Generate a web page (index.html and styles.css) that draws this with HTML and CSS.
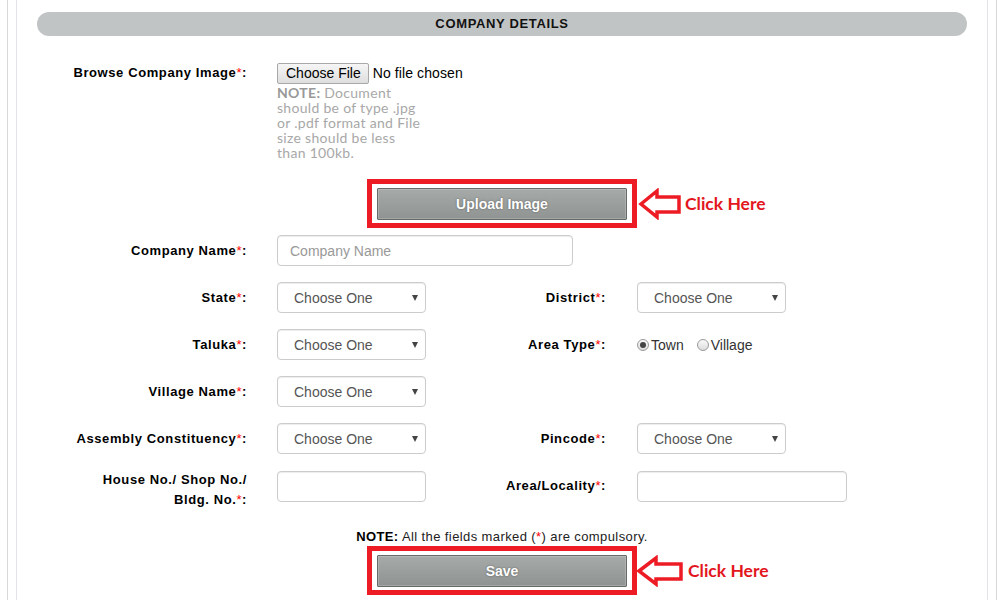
FILE: index.html
```html
<!DOCTYPE html>
<html lang="en">
<head>
<meta charset="utf-8">
<title>Company Details</title>
<link rel="stylesheet" href="styles.css">
</head>
<body>
<div class="frame">
  <div class="inner">
    <h2 class="section-title">COMPANY DETAILS</h2>

    <div class="browse">
      <label class="lbl">Browse Company Image<span class="req">*</span>:</label>
      <div class="file-col">
        <div class="file"><span class="file-btn">Choose File</span><span class="file-name">No file chosen</span></div>
        <p class="file-note"><b>NOTE:</b> Document<br>should be of type .jpg or .pdf format and File size should be less than 100kb.</p>
      </div>
    </div>

    <div class="action action-upload">
      <div class="hl">
        <button class="btn" type="button">Upload Image</button>
        <div class="callout">
          <svg class="arrow" viewBox="0 0 44 32" width="44" height="32"><polygon points="3,16 19,3 19,9 41,9 41,24 19,24 19,29" /></svg>
          <span>Click Here</span>
        </div>
      </div>
    </div>

    <div class="grid">
      <label class="lbl c1">Company Name<span class="req">*</span>:</label>
      <div class="field span3"><input class="text wide" type="text" placeholder="Company Name"></div>

      <label class="lbl c1">State<span class="req">*</span>:</label>
      <div class="field"><div class="select"><select><option>Choose One</option></select></div></div>
      <label class="lbl">District<span class="req">*</span>:</label>
      <div class="field r"><div class="select"><select><option>Choose One</option></select></div></div>

      <label class="lbl c1">Taluka<span class="req">*</span>:</label>
      <div class="field"><div class="select"><select><option>Choose One</option></select></div></div>
      <label class="lbl">Area Type<span class="req">*</span>:</label>
      <div class="field r radios">
        <label class="radio"><input type="radio" name="area" checked><span>Town</span></label>
        <label class="radio"><input type="radio" name="area"><span>Village</span></label>
      </div>

      <label class="lbl c1">Village Name<span class="req">*</span>:</label>
      <div class="field"><div class="select"><select><option>Choose One</option></select></div></div>

      <label class="lbl c1">Assembly Constituency<span class="req">*</span>:</label>
      <div class="field"><div class="select"><select><option>Choose One</option></select></div></div>
      <label class="lbl">Pincode<span class="req">*</span>:</label>
      <div class="field r"><div class="select"><select><option>Choose One</option></select></div></div>

      <label class="lbl c1 top">House No./ Shop No./<br>Bldg. No.<span class="req">*</span>:</label>
      <div class="field top"><input class="text small" type="text"></div>
      <label class="lbl top-c">Area/Locality<span class="req">*</span>:</label>
      <div class="field r top"><input class="text locality" type="text"></div>
    </div>

    <p class="note"><b>NOTE:</b> All the fields marked (<span class="req">*</span>) are compulsory.</p>

    <div class="action action-save">
      <div class="hl">
        <button class="btn" type="button">Save</button>
        <div class="callout">
          <svg class="arrow" viewBox="0 0 48 32" width="48" height="32"><polygon points="3,16 20,3 20,9 45,9 45,24 20,24 20,29" /></svg>
          <span>Click Here</span>
        </div>
      </div>
    </div>
  </div>
</div>
</body>
</html>
```

FILE: styles.css
```css
* { box-sizing: border-box; }

html, body {
  margin: 0;
  padding: 0;
  background: #fff;
}

body {
  font-family: "Liberation Sans", Arial, sans-serif;
  color: #000;
}

.frame {
  margin-left: 7px;
  width: 990px;
  min-height: 600px;
  padding: 0 8px;
  border-left: 1px solid #d8d8d8;
  border-right: 1px solid #d8d8d8;
}

.inner {
  min-height: 600px;
  padding: 12px 20px 0;
  border-left: 1px solid #e3e3ec;
  border-right: 1px solid #e3e3ec;
}

.section-title {
  margin: 0;
  height: 24px;
  line-height: 24px;
  background: #c1c4c4;
  border-radius: 12px;
  text-align: center;
  font-size: 13px;
  font-weight: bold;
  letter-spacing: 0.65px;
  color: #111;
}

.lbl {
  font-size: 13px;
  font-weight: bold;
  line-height: 20px;
  text-align: right;
  color: #000;
  letter-spacing: 0.6px;
}

.req { color: #f00; font-weight: normal; }

/* browse row */
.browse {
  margin-top: 27px;
  display: grid;
  grid-template-columns: 210px 1fr;
}

.file-col { padding-left: 30px; }

.file {
  display: flex;
  align-items: center;
  height: 20px;
  font-size: 14px;
  line-height: 16px;
}

.file-btn {
  display: inline-block;
  height: 21px;
  line-height: 19px;
  padding: 0 7px 0 8px;
  border: 1px solid #a8a8a8;
  border-radius: 2px;
  background: linear-gradient(#f6f6f6, #dedede);
  color: #000;
}

.file-name { margin-left: 4px; color: #000; letter-spacing: 0.1px; }

.file-note {
  margin: 2px 0 0;
  width: 146px;
  font-family: Lato, "Open Sans", sans-serif;
  font-size: 14px;
  line-height: 15px;
  letter-spacing: 0.3px;
  color: #a8a8a8;
}

.file-note b { color: #999; }

/* highlighted buttons */
.action {
  display: flex;
  justify-content: center;
}

.action-upload { margin-top: 19px; }
.action-save { margin-top: 0; }

.hl {
  position: relative;
  border: 5px solid #ed1c24;
  padding: 4px 5px 3px;
}

.btn {
  display: block;
  width: 250px;
  height: 32px;
  border: 1px solid #666b69;
  border-radius: 1px;
  background: linear-gradient(#a6aaa8, #8f9391);
  box-shadow: inset 0 0 0 1px rgba(255,255,255,0.18);
  color: #fff;
  font-family: "Liberation Sans", Arial, sans-serif;
  font-size: 14px;
  font-weight: bold;
  text-shadow: 0 0 2px rgba(0,0,0,0.45);
  padding: 0;
}

.callout {
  position: absolute;
  left: calc(100% + 6px);
  top: 50%;
  transform: translateY(-50%);
  display: flex;
  align-items: center;
  white-space: nowrap;
}

.arrow polygon {
  fill: #fff;
  stroke: #ed1c24;
  stroke-width: 3.5;
  stroke-linejoin: miter;
}

.callout span {
  margin-left: 3px;
  font-family: Lato, "Open Sans", sans-serif;
  font-weight: bold;
  font-size: 17.5px;
  color: #e3161e;
}

.action-save .callout { left: calc(100% + 4px); }
.action-save .callout span { margin-left: 4px; }

/* grid */
.grid {
  margin-top: 7px;
  display: grid;
  grid-template-columns: 210px 230px 129px 1fr;
  row-gap: 16px;
  align-items: center;
}

.c1 { grid-column: 1; }

.field { padding-left: 30px; }
.field.r { padding-left: 31px; }
.span3 { grid-column: 2 / 5; }

.top { align-self: start; }
.field.top { padding-top: 1px; }
.top-c { align-self: start; margin-top: 6px; }

.text {
  display: block;
  height: 31px;
  padding: 0 12px;
  border: 1px solid #ccc;
  border-radius: 4px;
  box-shadow: inset 0 1px 1px rgba(0,0,0,0.075);
  font-family: "Liberation Sans", Arial, sans-serif;
  font-size: 14px;
  color: #555;
  background: #fff;
}

.text::placeholder { color: #999; }

.wide { width: 296px; }
.small { width: 149px; }
.locality { width: 210px; }

.select {
  position: relative;
  width: 149px;
}

.select select {
  display: block;
  width: 100%;
  height: 31px;
  padding: 0 20px 0 16px;
  border: 1px solid #ccc;
  border-radius: 4px;
  background: #fff;
  box-shadow: inset 0 1px 1px rgba(0,0,0,0.075);
  -webkit-appearance: none;
  appearance: none;
  font-family: "Liberation Sans", Arial, sans-serif;
  font-size: 14px;
  color: #555;
}

.select::after {
  content: "";
  position: absolute;
  right: 8px;
  top: 13px;
  border-left: 3.5px solid transparent;
  border-right: 3.5px solid transparent;
  border-top: 6px solid #444;
  pointer-events: none;
}

.radios {
  display: flex;
  align-items: center;
  font-size: 14px;
  color: #333;
}

.radio {
  display: flex;
  align-items: center;
  margin-right: 13px;
}

.radio input {
  -webkit-appearance: none;
  appearance: none;
  margin: 0 2px 0 0;
  width: 12px;
  height: 12px;
  border: 1px solid #9a9a9a;
  border-radius: 50%;
  background: linear-gradient(#fafafa, #dcdcdc);
  position: relative;
}

.radio input:checked::after {
  content: "";
  position: absolute;
  left: 2px;
  top: 2px;
  width: 6px;
  height: 6px;
  border-radius: 50%;
  background: #444;
}

.note {
  margin: 18px 0 0;
  text-align: center;
  font-size: 13px;
  line-height: 18px;
  letter-spacing: 0.4px;
  color: #222;
}

.note b { color: #000; }
```
